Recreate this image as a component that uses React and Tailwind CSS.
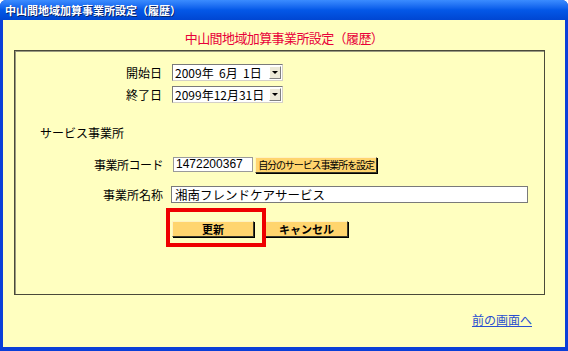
import React from "react";

const jp = { fontFamily: '"Noto Sans CJK JP", "Liberation Sans", sans-serif' };

// select-like date box
const DateBox = ({ value }) => (
  <div className="flex items-center h-[17px] w-[111px] bg-white border border-t-[#7a7a7a] border-l-[#7a7a7a] border-b-[#d4d0c8] border-r-[#d4d0c8]">
    <div className="flex-1 pl-[2px] text-[12px] leading-[15px] text-black whitespace-pre">{value}</div>
    <div className="w-[12px] h-[13px] mr-[1px] flex items-center justify-center bg-[#ece9d8] border border-t-white border-l-white border-b-[#808080] border-r-[#808080]">
      <svg width="6" height="4" viewBox="0 0 6 4">
        <path d="M0 0h6L3 3z" fill="#000" />
      </svg>
    </div>
  </div>
);

const GoldButton = ({ children, className = "" }) => (
  <button
    className={`flex items-center justify-center whitespace-nowrap overflow-hidden bg-[#ffd56e] border border-t-[#fff2c0] border-l-[#fff2c0] border-r-[#3a3a2a] border-b-[#3a3a2a] shadow-[1px_1px_0_#000] text-black ${className}`}
  >
    {children}
  </button>
);

export default function App() {
  return (
    <div className="w-[568px] h-[351px] flex flex-col bg-[#0a3fd8] rounded-t-[6px] overflow-hidden" style={jp}>
      {/* title bar */}
      <div className="h-[20px] flex items-center pl-[5px] bg-gradient-to-b from-[#3b8cff] via-[#0458e8] to-[#0046d2]">
        <span className="text-white font-bold text-[11px] leading-none [text-shadow:1px_1px_0_#0a246a]">
          中山間地域加算事業所設定（履歴）
        </span>
      </div>

      {/* client area */}
      <div className="flex-1 mx-[3px] mb-[4px] bg-[#ffffc0] flex flex-col">
        <div className="h-[30px] flex items-center justify-center pt-[4px]">
          <span className="text-[#e8003a] text-[13px] leading-none tracking-[-0.6px]">中山間地域加算事業所設定（履歴）</span>
        </div>

        <div className="ml-[11px] mr-[20px] h-[245px] border border-[#4a4a3a] shadow-[inset_1px_1px_0_#9a9a80] flex flex-col">
          {/* start date */}
          <div className="flex items-center mt-[13px]">
            <div className="w-[147px] text-right text-[12px] leading-none">開始日</div>
            <div className="ml-[10px]">
              <DateBox value="2009年  6月  1日" />
            </div>
          </div>
          {/* end date */}
          <div className="flex items-center mt-[5px]">
            <div className="w-[147px] text-right text-[12px] leading-none">終了日</div>
            <div className="ml-[10px]">
              <DateBox value="2099年12月31日" />
            </div>
          </div>

          <div className="mt-[23px] pl-[25px] text-[12px] leading-[14px]">サービス事業所</div>

          {/* office code */}
          <div className="flex items-start mt-[17px]">
            <div className="w-[148px] text-right text-[12px] leading-[15px] tracking-[-0.5px]">事業所コード</div>
            <div className="ml-[10px] w-[80px] h-[15px] bg-white border border-[#9a9a9a] text-[12px] leading-[13px] pl-[2px]" style={{ fontFamily: '"Liberation Sans", sans-serif' }}>
              1472200367
            </div>
            <GoldButton className="ml-[2px] w-[122px] h-[16px] text-[10px] leading-none tracking-[-1.1px]">
              自分のサービス事業所を設定
            </GoldButton>
          </div>

          {/* office name */}
          <div className="flex items-center mt-[13px]">
            <div className="w-[148px] text-right text-[12px] leading-none">事業所名称</div>
            <div className="ml-[8px] w-[357px] h-[17px] bg-white border border-[#7a7a7a] text-[12.5px] leading-[15px] pl-[3px]">
              湘南フレンドケアサービス
            </div>
          </div>

          {/* action buttons */}
          <div className="flex items-center mt-[18px] pl-[157px]">
            <div className="relative">
              <GoldButton className="w-[82px] h-[16px] text-[11px] font-bold leading-none">更新</GoldButton>
              <div className="absolute left-[-6px] top-[-13px] w-[100px] h-[39px] border-4 border-[#ee0000] pointer-events-none" />
            </div>
            <GoldButton className="ml-[11px] w-[83px] h-[16px] text-[11px] font-bold leading-none">キャンセル</GoldButton>
          </div>
        </div>

        <div className="flex justify-end mr-[33px] mt-[19px]">
          <span className="text-[#2a4fd0] underline text-[12px] leading-none">前の画面へ</span>
        </div>
      </div>
    </div>
  );
}
